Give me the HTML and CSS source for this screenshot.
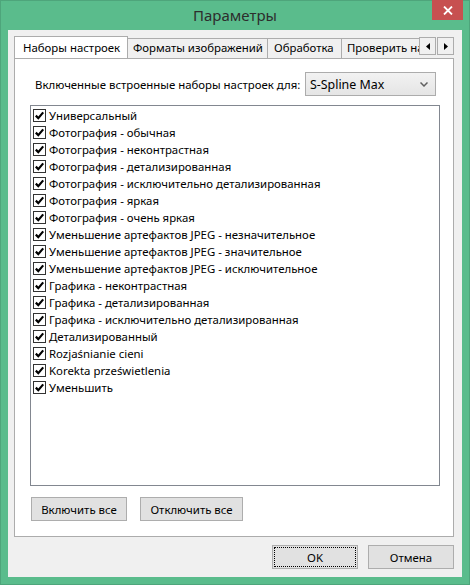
FILE: index.html
```html
<!DOCTYPE html>
<html lang="ru">
<head>
<meta charset="utf-8">
<title>Параметры</title>
<link rel="stylesheet" href="styles.css">
</head>
<body>
<div class="window">
  <div class="titlebar">
    <div class="title">Параметры</div>
    <div class="close">
      <svg width="10" height="9" viewBox="0 0 10 9"><path d="M1 0.5 L9 8.5 M9 0.5 L1 8.5" stroke="#fff" stroke-width="1.8"/></svg>
    </div>
  </div>
  <div class="client">
    <div class="tabstrip">
      <div class="tabs">
        <div class="tab tab-active t1">Наборы настроек</div>
        <div class="tab t2">Форматы изображений</div>
        <div class="tab t3">Обработка</div>
        <div class="tab t4">Проверить наличие обновлений</div>
      </div>
      <div class="arrows">
        <div class="arrow"><svg width="4" height="7" viewBox="0 0 4 7"><path d="M4 0 L0 3.5 L4 7 Z" fill="#000"/></svg></div>
        <div class="arrow"><svg width="4" height="7" viewBox="0 0 4 7"><path d="M0 0 L4 3.5 L0 7 Z" fill="#000"/></svg></div>
      </div>
    </div>
    <div class="panel">
      <div class="presetrow">
        <span class="label">Включенные встроенные наборы настроек для:</span>
        <div class="combo">
          <span>S-Spline Max</span>
          <svg width="8" height="5" viewBox="0 0 8 5"><path d="M0.5 0.5 L4 4 L7.5 0.5" fill="none" stroke="#606060" stroke-width="1.5"/></svg>
        </div>
      </div>
      <div class="list">
        <div class="item"><span class="cb"></span>Универсальный</div>
        <div class="item"><span class="cb"></span>Фотография - обычная</div>
        <div class="item"><span class="cb"></span>Фотография - неконтрастная</div>
        <div class="item"><span class="cb"></span>Фотография - детализированная</div>
        <div class="item"><span class="cb"></span>Фотография - исключительно детализированная</div>
        <div class="item"><span class="cb"></span>Фотография - яркая</div>
        <div class="item"><span class="cb"></span>Фотография - очень яркая</div>
        <div class="item"><span class="cb"></span>Уменьшение артефактов JPEG - незначительное</div>
        <div class="item"><span class="cb"></span>Уменьшение артефактов JPEG - значительное</div>
        <div class="item"><span class="cb"></span>Уменьшение артефактов JPEG - исключительное</div>
        <div class="item"><span class="cb"></span>Графика - неконтрастная</div>
        <div class="item"><span class="cb"></span>Графика - детализированная</div>
        <div class="item"><span class="cb"></span>Графика - исключительно детализированная</div>
        <div class="item"><span class="cb"></span>Детализированный</div>
        <div class="item"><span class="cb"></span>Rozjaśnianie cieni</div>
        <div class="item"><span class="cb"></span>Korekta prześwietlenia</div>
        <div class="item"><span class="cb"></span>Уменьшить</div>
      </div>
      <div class="listbuttons">
        <div class="btn b-on">Включить все</div>
        <div class="btn b-off">Отключить все</div>
      </div>
    </div>
    <div class="dlgbuttons">
      <div class="btn b-dlg b-ok"><span>OK</span></div>
      <div class="btn b-dlg">Отмена</div>
    </div>
  </div>
</div>
</body>
</html>
```

FILE: styles.css
```css
html, body {
  margin: 0;
  padding: 0;
}
body {
  width: 470px;
  height: 585px;
  overflow: hidden;
  font-family: "Noto Sans", "Open Sans", sans-serif;
  font-size: 11.4px;
  color: #000;
}
.window {
  box-sizing: border-box;
  width: 470px;
  height: 585px;
  background: #5abc8c;
  border: 1px solid #4ea57b;
  display: flex;
  flex-direction: column;
}
.titlebar {
  height: 30px;
  display: grid;
  grid-template-columns: 1fr auto 1fr;
  align-items: start;
}
.title {
  grid-column: 2;
  font-size: 15px;
  color: #2d2d2d;
  line-height: 30px;
  margin-top: -1px;
}
.close {
  grid-column: 3;
  justify-self: end;
  width: 31px;
  height: 20px;
  margin-right: 6px;
  margin-top: -1px;
  background: #c75050;
  display: flex;
  align-items: center;
  justify-content: center;
}
.client {
  flex: 1;
  margin: 0 7px 7px 7px;
  background: #f0f0f0;
  padding: 6px 8px 8px 6px;
  display: flex;
  flex-direction: column;
}
.tabstrip {
  height: 22px;
  display: flex;
}
.tabs {
  width: 405px;
  overflow: hidden;
  display: flex;
  align-items: flex-end;
  white-space: nowrap;
}
.tab {
  box-sizing: border-box;
  flex: none;
  height: 20px;
  line-height: 18px;
  border: 1px solid #acacac;
  border-bottom: none;
  border-left: none;
  background: #f0f0f0;
  padding-left: 5px;
  overflow: hidden;
}
.tab-active {
  position: relative;
  z-index: 1;
  height: 23px;
  margin-bottom: -1px;
  border-left: 1px solid #acacac;
  background: #fff;
  line-height: 21px;
  padding-left: 8px;
}
.t1 { width: 114px; }
.t2 { width: 140px; }
.t3 { width: 74px; padding-left: 6px; }
.t4 { width: 120px; }
.arrows {
  display: flex;
  gap: 1px;
  padding-top: 1px;
}
.arrow {
  box-sizing: border-box;
  width: 17px;
  height: 18px;
  border: 1px solid #acacac;
  background: #f0f0f0;
  display: flex;
  align-items: center;
  justify-content: center;
}
.panel {
  box-sizing: border-box;
  height: 479px;
  background: #fff;
  border: 1px solid #acacac;
  display: flex;
  flex-direction: column;
  padding: 13px 0 0 15px;
}
.presetrow {
  display: flex;
  align-items: center;
  height: 24px;
  padding-left: 5px;
}
.label {
  flex: 1;
  white-space: nowrap;
}
.combo {
  box-sizing: border-box;
  width: 131px;
  height: 24px;
  margin-right: 17px;
  border: 1px solid #acacac;
  background: linear-gradient(#f2f2f2, #e5e5e5);
  display: flex;
  align-items: center;
  justify-content: space-between;
  padding: 0 7px 0 4px;
  font-size: 12.4px;
}
.list {
  box-sizing: border-box;
  margin-top: 9px;
  width: 410px;
  height: 381px;
  border: 1px solid #828790;
  padding: 1px 0 0 2px;
}
.item {
  height: 17px;
  display: flex;
  align-items: center;
  white-space: nowrap;
}
.cb {
  box-sizing: border-box;
  width: 13px;
  height: 13px;
  border: 1px solid #333;
  margin-right: 3px;
  background: #fff url("data:image/svg+xml;utf8,<svg xmlns='http://www.w3.org/2000/svg' width='11' height='11' viewBox='0 0 11 11'><path d='M1.8 5.6 L4.3 8.1 L9.2 2.4' fill='none' stroke='black' stroke-width='2.2'/></svg>") no-repeat center;
}
.listbuttons {
  display: flex;
  gap: 13px;
  margin-top: 11px;
  padding-left: 1px;
}
.btn {
  box-sizing: border-box;
  height: 24px;
  border: 1px solid #adadad;
  background: #e1e1e1;
  display: flex;
  align-items: center;
  justify-content: center;
}
.b-on { width: 96px; }
.b-off { width: 103px; }
.dlgbuttons {
  display: flex;
  justify-content: flex-end;
  gap: 10px;
  margin-top: 8px;
}
.b-dlg { width: 86px; }
.b-ok {
  outline: 1px dotted #000;
  outline-offset: -3px;
}
```
